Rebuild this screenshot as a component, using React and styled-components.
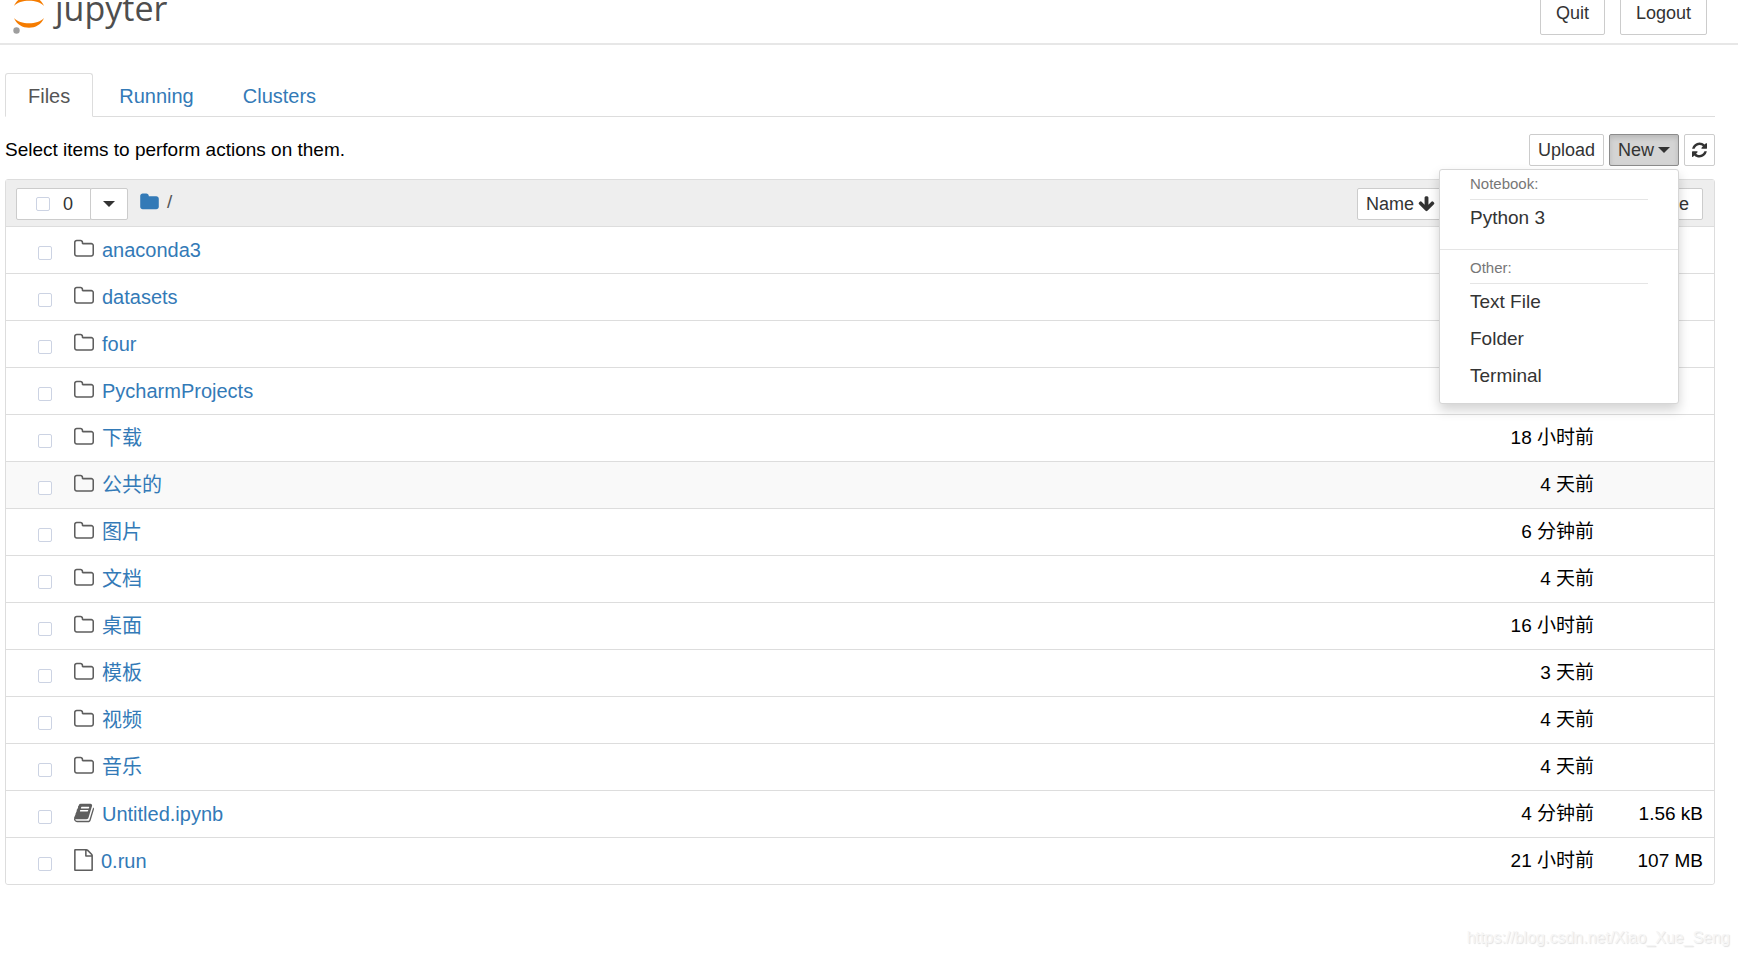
import React, { useState } from 'react';
import styled, { createGlobalStyle, css } from 'styled-components';

const GlobalStyle = createGlobalStyle`
  * {
    box-sizing: border-box;
  }
  body {
    margin: 0;
    background: #fff;
    color: #000;
    font-family: 'Liberation Sans', 'Noto Sans CJK SC', sans-serif;
    font-size: 19px;
    line-height: 26px;
  }
  a {
    color: #337ab7;
    text-decoration: none;
  }
`;

const Header = styled.header`
  display: flex;
  align-items: flex-start;
  justify-content: space-between;
  margin-top: -10px;
  padding: 0 31px 8px 12px;
  border-bottom: 2px solid #e7e7e7;
`;

const Logo = styled.a`
  display: flex;
  gap: 9px;
  color: #4e4e4e;
  font-family: 'Open Sans', sans-serif;
  font-size: 34px;
  line-height: 37px;
`;

const HeaderButtons = styled.div`
  display: flex;
  gap: 15px;
`;

const Button = styled.button`
  display: inline-flex;
  align-items: center;
  justify-content: center;
  gap: 4px;
  height: ${props => (props.$large ? '45px' : '32px')};
  padding: 0 ${props => (props.$large ? '15px' : '8px')};
  border: 1px solid #ccc;
  border-radius: 2px;
  background: #fff;
  color: #333;
  font-family: inherit;
  font-size: 18px;
  line-height: 26px;
  cursor: pointer;
  ${props =>
    props.$active &&
    css`
      border-color: #8c8c8c;
      background: #d4d4d4;
      box-shadow: inset 0 3px 5px rgba(0, 0, 0, 0.125);
    `}
`;

const IconButton = styled(Button)`
  padding: 0 7px;
`;

const Caret = styled.span`
  border-top: 6px solid;
  border-left: 6px solid transparent;
  border-right: 6px solid transparent;
`;

const Main = styled.main`
  padding: 28px 23px 0 5px;
`;

const Tabs = styled.nav`
  display: flex;
  gap: 3px;
  border-bottom: 1px solid #ddd;
`;

const Tab = styled.a`
  margin-bottom: -1px;
  padding: 9px 22px 7px;
  border: 1px solid transparent;
  border-radius: 3px 3px 0 0;
  font-size: 20px;
  ${props =>
    props.$active &&
    css`
      border-color: #ddd #ddd #fff;
      background: #fff;
      color: #555;
    `}
`;

const Toolbar = styled.div`
  display: flex;
  align-items: center;
  justify-content: space-between;
  padding: 17px 0 13px;
`;

const ToolbarButtons = styled.div`
  display: flex;
  gap: 5px;
`;

const Dropdown = styled.div`
  position: relative;
`;

const Menu = styled.div`
  position: absolute;
  top: 35px;
  right: 0;
  z-index: 10;
  width: 240px;
  padding-bottom: 8px;
  border: 1px solid #d6d6d6;
  border-radius: 3px;
  background: #fff;
  box-shadow: 0 6px 12px rgba(0, 0, 0, 0.175);
`;

const MenuLabel = styled.div`
  margin: 0 30px;
  padding-bottom: 2px;
  border-bottom: 1px solid #e5e5e5;
  color: #777;
  font-size: 15px;
  line-height: 27px;
`;

const MenuItem = styled.a`
  display: block;
  padding: 0 30px 2px;
  color: #333;
  line-height: 35px;
`;

const MenuDivider = styled.hr`
  margin: 12px 0 4px;
  border: 0;
  border-top: 1px solid #e5e5e5;
`;

const FileTable = styled.table`
  width: 100%;
  border: 1px solid #ddd;
  border-radius: 3px;
  border-spacing: 0;
`;

const HeadCell = styled.th`
  height: 46px;
  padding: 2px 11px 0 10px;
  background: #eee;
  font-weight: normal;
`;

const HeadContent = styled.div`
  display: flex;
  align-items: center;
  justify-content: space-between;
`;

const Group = styled.div`
  display: flex;
  align-items: center;
`;

const SelectAll = styled.label`
  display: flex;
  align-items: center;
  gap: 13px;
  width: 75px;
  height: 32px;
  padding-left: 19px;
  border: 1px solid #ccc;
  border-radius: 2px 0 0 2px;
  background: #fff;
  color: #333;
  font-size: 18px;
`;

const SelectToggle = styled(Button)`
  width: 38px;
  margin-left: -1px;
`;

const Breadcrumb = styled.div`
  display: flex;
  align-items: center;
  gap: 8px;
  padding: 0 0 4px 12px;
  color: #555;
`;

const HomeLink = styled.a`
  display: flex;
`;

const SortButton = styled(Button)`
  margin-left: -1px;
  min-width: ${props => (props.$wide ? '172px' : 'auto')};
  padding-right: ${props => (props.$last ? '13px' : '8px')};
`;

const Checkbox = styled.input`
  appearance: none;
  width: 14px;
  height: 14px;
  margin: 0;
  border: 1px solid #ccd3e3;
  border-radius: 2px;
  background: #fff;
  &:checked {
    background: #337ab7;
  }
`;

const Row = styled.tr`
  background: ${props => (props.$hovered ? '#f9f9f9' : '#fff')};
  &:last-child td:first-child {
    border-bottom-left-radius: 3px;
  }
  &:last-child td:last-child {
    border-bottom-right-radius: 3px;
  }
`;

const Cell = styled.td`
  height: 47px;
  padding: 0 11px 0 0;
  border-top: 1px solid #ddd;
  text-align: right;
  white-space: nowrap;
`;

const NameCell = styled(Cell)`
  padding-left: 32px;
`;

const Item = styled.div`
  display: flex;
  align-items: center;
  gap: 8px;
  font-size: 20px;

  ${Checkbox} {
    margin: 6px 14px 0 0;
  }
`;

const Svg = styled.svg`
  flex: none;
  fill: currentColor;
`;

const ItemIcon = styled(Svg)`
  margin-bottom: 2px;
  color: #5e5e5e;
`;

const Watermark = styled.footer`
  padding: 40px 8px 0 0;
  color: #f6f6f6;
  font-size: 16px;
  text-align: right;
  text-shadow: 1px 1px 1px #e0e0e0;
`;

const paths = {
  folderOpen:
    'M1600 1312v-704q0-40-28-68t-68-28h-704q-40 0-68-28t-28-68v-64q0-40-28-68t-68-28h-320q-40 0-68 28t-28 68v960q0 40 28 68t68 28h1216q40 0 68-28t28-68zm128-704v704q0 92-66 158t-158 66h-1216q-92 0-158-66t-66-158v-960q0-92 66-158t158-66h320q92 0 158 66t66 158v32h672q92 0 158 66t66 158z',
  folder:
    'M1728 608v704q0 92-66 158t-158 66h-1216q-92 0-158-66t-66-158v-960q0-92 66-158t158-66h320q92 0 158 66t66 158v32h672q92 0 158 66t66 158z',
  file:
    'M1596 380q28 28 48 76t20 88v1152q0 40-28 68t-68 28h-1344q-40 0-68-28t-28-68v-1600q0-40 28-68t68-28h896q40 0 88 20t76 48zm-444-244v376h376q-10-29-22-41l-313-313q-12-12-41-22zm384 1528v-1024h-416q-40 0-68-28t-28-68v-416h-768v1536h1280z',
  notebook:
    'M1703 478q40 57 18 129l-275 906q-19 64-76.5 107.5t-122.5 43.5h-923q-77 0-148.5-53.5t-99.5-131.5q-24-67-2-127 0-4 3-27t4-37q1-8-3-21.5t-3-19.5q2-11 8-21t16.5-23.5 16.5-23.5q23-38 45-91.5t30-91.5q3-10 .5-30t-.5-28q3-11 17-28t17-23q21-36 42-92t25-90q1-9-2.5-32t.5-28q4-13 22-30.5t22-22.5q19-26 42.5-84.5t27.5-96.5q1-8-3-25.5t-2-26.5q2-8 9-18t18-23 17-21q8-12 16.5-30.5t15-35 16-36 19.5-32 26.5-23.5 36-11.5 47.5 5.5l-1 3q38-9 51-9h761q74 0 114 56t18 130l-274 906q-36 119-71.5 153.5t-128.5 34.5h-869q-27 0-38 15-11 16-1 43 24 70 144 70h923q29 0 56-15.5t35-41.5l300-987q7-22 5-57 38 15 59 43zm-1064 2q-4 13 2 22.5t20 9.5h608q13 0 25.5-9.5t16.5-22.5l21-64q4-13-2-22.5t-20-9.5h-608q-13 0-25.5 9.5t-16.5 22.5zm-83 256q-4 13 2 22.5t20 9.5h608q13 0 25.5-9.5t16.5-22.5l21-64q4-13-2-22.5t-20-9.5h-608q-13 0-25.5 9.5t-16.5 22.5z',
  refresh:
    'M1639 1056q0 5-1 7-64 268-268 434.5t-478 166.5q-146 0-282.5-55t-243.5-157l-129 129q-19 19-45 19t-45-19-19-45v-448q0-26 19-45t45-19h448q26 0 45 19t19 45-19 45l-137 137q71 66 161 102t187 36q134 0 250-65t186-179q11-17 53-117 8-23 30-23h192q13 0 22.5 9.5t9.5 22.5zm25-800v448q0 26-19 45t-45 19h-448q-26 0-45-19t-19-45 19-45l138-138q-148-137-349-137-134 0-250 65t-186 179q-11 17-53 117-8 23-30 23h-199q-13 0-22.5-9.5t-9.5-22.5v-7q65-268 270-434.5t480-166.5q146 0 284 55.5t245 156.5l130-129q19-19 45-19t45 19 19 45z',
  arrowDown:
    'M1675 832q0 53-37 90l-651 652q-39 37-91 37-53 0-90-37l-651-652q-38-36-38-90 0-53 38-91l74-75q39-37 91-37 53 0 90 37l294 294v-704q0-52 38-90t90-38h128q52 0 90 38t38 90v704l294-294q37-37 90-37 52 0 91 37l75 75q37 39 37 91z'
};

// horizontal crop of each 1792 unit glyph, so icons keep their own widths
const boxes = {
  folderOpen: [64, 1664],
  folder: [64, 1664],
  file: [128, 1536],
  notebook: [64, 1664],
  refresh: [128, 1536],
  arrowDown: [64, 1664]
};

const Icon = ({ name, size, as: Component = Svg }) => {
  const [x, width] = boxes[name];
  return (
    <Component
      aria-hidden="true"
      width={Math.round((size * width) / 1792)}
      height={size}
      viewBox={`${x} 0 ${width} 1792`}
    >
      <path d={paths[name]} />
    </Component>
  );
};

const files = [
  { name: 'anaconda3', modified: '', size: '' },
  { name: 'datasets', modified: '', size: '' },
  { name: 'four', modified: '', size: '' },
  { name: 'PycharmProjects', modified: '', size: '' },
  { name: '下载', modified: '18 小时前', size: '' },
  { name: '公共的', modified: '4 天前', size: '', hovered: true },
  { name: '图片', modified: '6 分钟前', size: '' },
  { name: '文档', modified: '4 天前', size: '' },
  { name: '桌面', modified: '16 小时前', size: '' },
  { name: '模板', modified: '3 天前', size: '' },
  { name: '视频', modified: '4 天前', size: '' },
  { name: '音乐', modified: '4 天前', size: '' },
  { name: 'Untitled.ipynb', modified: '4 分钟前', size: '1.56 kB', icon: 'notebook' },
  { name: '0.run', modified: '21 小时前', size: '107 MB', icon: 'file' }
];

const NewMenu = () => {
  const [open, setOpen] = useState(true);
  return (
    <Dropdown>
      <Button $active={open} aria-expanded={open} onClick={() => setOpen(!open)}>
        New
        <Caret />
      </Button>
      {open && (
        <Menu>
          <MenuLabel>Notebook:</MenuLabel>
          <MenuItem href="#python3">Python 3</MenuItem>
          <MenuDivider />
          <MenuLabel>Other:</MenuLabel>
          <MenuItem href="#text">Text File</MenuItem>
          <MenuItem href="#folder">Folder</MenuItem>
          <MenuItem href="#terminal">Terminal</MenuItem>
        </Menu>
      )}
    </Dropdown>
  );
};

const FileRow = ({ file }) => (
  <Row $hovered={file.hovered}>
    <NameCell>
      <Item>
        <Checkbox type="checkbox" aria-label={file.name} />
        <Icon name={file.icon || 'folderOpen'} size={22} as={ItemIcon} />
        <a href={`#${file.name}`}>{file.name}</a>
      </Item>
    </NameCell>
    <Cell>{file.modified}</Cell>
    <Cell>{file.size}</Cell>
  </Row>
);

const App = () => (
  <>
    <GlobalStyle />
    <Header>
      <Logo href="#home">
        <svg width="34" height="44" viewBox="0 0 34 44" aria-hidden="true">
          <path d="M2 16C7 3 27 3 32 16C26 9 8 9 2 16z" fill="#f57c00" />
          <path d="M2 28C7 41 27 41 32 28C26 35 8 35 2 28z" fill="#f57c00" />
          <circle cx="4.5" cy="40.5" r="3.2" fill="#9e9e9e" />
        </svg>
        jupyter
      </Logo>
      <HeaderButtons>
        <Button $large>Quit</Button>
        <Button $large>Logout</Button>
      </HeaderButtons>
    </Header>
    <Main>
      <Tabs>
        <Tab href="#files" $active>
          Files
        </Tab>
        <Tab href="#running">Running</Tab>
        <Tab href="#clusters">Clusters</Tab>
      </Tabs>
      <Toolbar>
        <span>Select items to perform actions on them.</span>
        <ToolbarButtons>
          <Button>Upload</Button>
          <NewMenu />
          <IconButton aria-label="Refresh">
            <Icon name="refresh" size={18} />
          </IconButton>
        </ToolbarButtons>
      </Toolbar>
      <FileTable>
        <colgroup>
          <col />
          <col width="160" />
          <col width="109" />
        </colgroup>
        <thead>
          <tr>
            <HeadCell colSpan={3}>
              <HeadContent>
                <Group>
                  <SelectAll>
                    <Checkbox type="checkbox" />0
                  </SelectAll>
                  <SelectToggle aria-label="Select by type">
                    <Caret />
                  </SelectToggle>
                  <Breadcrumb>
                    <HomeLink href="#root" aria-label="Root folder">
                      <Icon name="folder" size={20} />
                    </HomeLink>
                    /
                  </Breadcrumb>
                </Group>
                <Group>
                  <SortButton>
                    Name
                    <Icon name="arrowDown" size={18} />
                  </SortButton>
                  <SortButton $wide>Last Modified</SortButton>
                  <SortButton $last>File size</SortButton>
                </Group>
              </HeadContent>
            </HeadCell>
          </tr>
        </thead>
        <tbody>
          {files.map(file => (
            <FileRow key={file.name} file={file} />
          ))}
        </tbody>
      </FileTable>
    </Main>
    <Watermark>https://blog.csdn.net/Xiao_Xue_Seng</Watermark>
  </>
);

export default App;
